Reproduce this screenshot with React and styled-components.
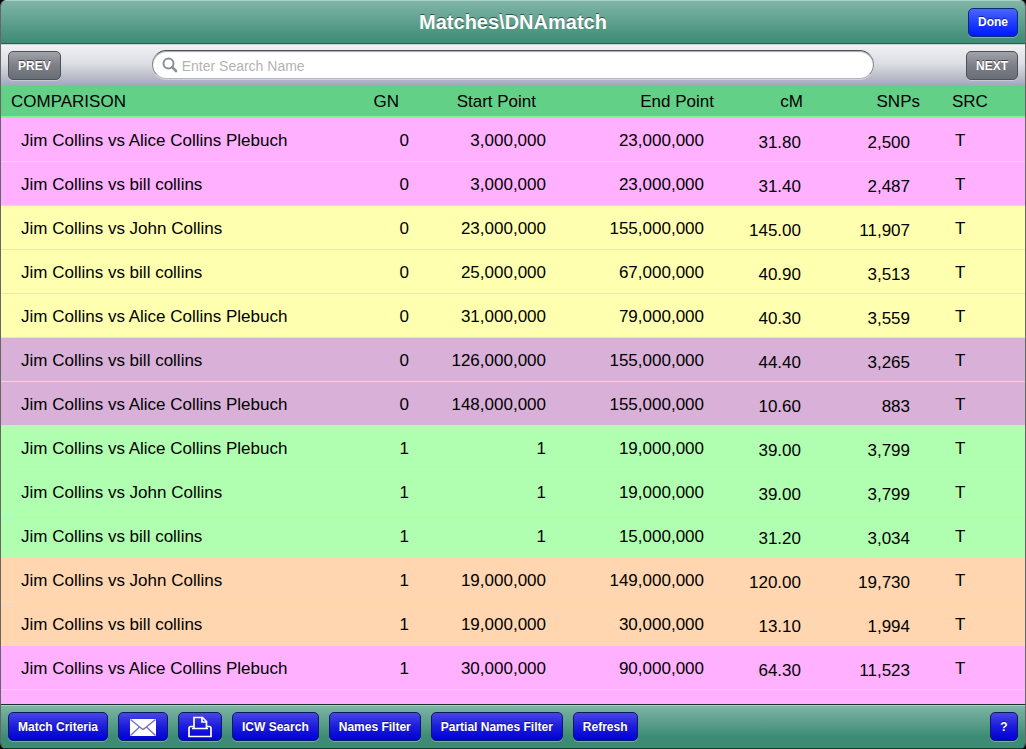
import React, { useState } from "react";
import styled, { createGlobalStyle } from "styled-components";

const COLORS = {
    pink: "#ffb0ff",
    yellow: "#ffffb0",
    purple: "#d8b0d8",
    green: "#b0ffb0",
    orange: "#ffd6b0",
};

const alice = "Jim Collins vs Alice Collins Plebuch";
const bill = "Jim Collins vs bill collins";
const john = "Jim Collins vs John Collins";

const matches = [
    { color: "pink", name: alice, gn: 0, start: 3000000, end: 23000000, cm: 31.8, snps: 2500 },
    { color: "pink", name: bill, gn: 0, start: 3000000, end: 23000000, cm: 31.4, snps: 2487 },
    { color: "yellow", name: john, gn: 0, start: 23000000, end: 155000000, cm: 145, snps: 11907 },
    { color: "yellow", name: bill, gn: 0, start: 25000000, end: 67000000, cm: 40.9, snps: 3513 },
    { color: "yellow", name: alice, gn: 0, start: 31000000, end: 79000000, cm: 40.3, snps: 3559 },
    { color: "purple", name: bill, gn: 0, start: 126000000, end: 155000000, cm: 44.4, snps: 3265 },
    { color: "purple", name: alice, gn: 0, start: 148000000, end: 155000000, cm: 10.6, snps: 883 },
    { color: "green", name: alice, gn: 1, start: 1, end: 19000000, cm: 39, snps: 3799 },
    { color: "green", name: john, gn: 1, start: 1, end: 19000000, cm: 39, snps: 3799 },
    { color: "green", name: bill, gn: 1, start: 1, end: 15000000, cm: 31.2, snps: 3034 },
    { color: "orange", name: john, gn: 1, start: 19000000, end: 149000000, cm: 120, snps: 19730 },
    { color: "orange", name: bill, gn: 1, start: 19000000, end: 30000000, cm: 13.1, snps: 1994 },
    { color: "pink", name: alice, gn: 1, start: 30000000, end: 90000000, cm: 64.3, snps: 11523 },
];

const format = (n) => n.toLocaleString("en-US");

export default function App() {
    const [search, setSearch] = useState("");

    return (
        <>
            <GlobalStyle />
            <Screen>
                <TitleBar>
                    <h1>Matches\DNAmatch</h1>
                    <BarButton $tone="bright">Done</BarButton>
                </TitleBar>

                <SearchBar>
                    <BarButton $tone="gray">PREV</BarButton>
                    <SearchField>
                        <SearchIcon />
                        <input
                            type="text"
                            aria-label="Search name"
                            placeholder="Enter Search Name"
                            value={search}
                            onChange={(e) => setSearch(e.target.value)}
                        />
                    </SearchField>
                    <BarButton $tone="gray">NEXT</BarButton>
                </SearchBar>

                <TableArea>
                    <MatchTable>
                        <colgroup>
                            <col />
                            <Col $width={70} />
                            <Col $width={137} />
                            <Col $width={168} />
                            <Col $width={87} />
                            <Col $width={119} />
                            <Col $width={95} />
                        </colgroup>
                        <thead>
                            <tr>
                                <HeadCell $left={10}>COMPARISON</HeadCell>
                                <HeadCell $right={20}>GN</HeadCell>
                                <HeadCell $right={20}>Start Point</HeadCell>
                                <HeadCell $right={10}>End Point</HeadCell>
                                <HeadCell $right={8}>cM</HeadCell>
                                <HeadCell $right={10}>SNPs</HeadCell>
                                <HeadCell $left={22}>SRC</HeadCell>
                            </tr>
                        </thead>
                        <tbody>
                            {matches.map((m, i) => (
                                <MatchRow key={i} $color={COLORS[m.color]}>
                                    <Cell $left={20}>{m.name}</Cell>
                                    <Cell $right={10}>{m.gn}</Cell>
                                    <Cell $right={10}>{format(m.start)}</Cell>
                                    <Cell $right={20}>{format(m.end)}</Cell>
                                    <Cell $right={10} $low>{m.cm.toFixed(2)}</Cell>
                                    <Cell $right={20} $low>{format(m.snps)}</Cell>
                                    <Cell $left={25}>T</Cell>
                                </MatchRow>
                            ))}
                        </tbody>
                    </MatchTable>
                </TableArea>

                <Toolbar>
                    <BarButton>Match Criteria</BarButton>
                    <BarButton aria-label="Email"><MailIcon /></BarButton>
                    <BarButton aria-label="Print"><PrinterIcon /></BarButton>
                    <BarButton>ICW Search</BarButton>
                    <BarButton>Names Filter</BarButton>
                    <BarButton>Partial Names Filter</BarButton>
                    <BarButton>Refresh</BarButton>
                    <Spacer />
                    <BarButton>?</BarButton>
                </Toolbar>
            </Screen>
        </>
    );
}

function SearchIcon() {
    return (
        <svg width="16" height="16" viewBox="0 0 16 16" fill="none" stroke="#8b8f98">
            <circle cx="6.5" cy="6.5" r="5" strokeWidth="2" />
            <path d="M10.2 10.2L14 14" strokeWidth="2.6" strokeLinecap="round" />
        </svg>
    );
}

function MailIcon() {
    return (
        <svg width="30" height="18" viewBox="0 0 30 18">
            <rect x="2" y="1" width="26" height="17" fill="#fff" />
            <path d="M2.5 1.5L13.5 10.5Q15 11.800 16.500 10.5L27.5 1.5M2.500 17.5L11.5 9M27.5 17.5L18.5 9" fill="none" stroke="#7472c0" strokeWidth="1.4" />
        </svg>
    );
}

function PrinterIcon() {
    return (
        <svg width="24" height="22" viewBox="0 0 24 22" fill="none" stroke="#fff" strokeWidth="1.7">
            <path d="M6 12V1.5h8.500l4 4V12M14 1.5V6h4.5" />
            <path d="M6 10.5H2.800Q1 10.5 1 12.5V20.500H23V12.500Q23 10.5 21.200 10.5H18.5" />
            <path d="M4 12.5H20" />
        </svg>
    );
}

const GlobalStyle = createGlobalStyle`
    * {
        box-sizing: border-box;
    }
    body {
        margin: 0;
        background-color: #000;
        font-family: "Liberation Sans", Arial, Helvetica, sans-serif;
    }
`
const Screen = styled.main`
    height: 100vh;
    display: flex;
    flex-direction: column;
    overflow: hidden;
    border: solid #666;
    border-width: 0 1px;
    border-radius: 6px;
`
const TitleBar = styled.header`
    flex: none;
    height: 44px;
    padding: 0 7px;
    display: grid;
    grid-template-columns: 1fr auto 1fr;
    align-items: center;
    background: linear-gradient(#80b5a6, #3c8b74);
    border-top: 1px solid #a9d3c6;
    border-bottom: 1px solid #2a6251;
    h1 {
        grid-column: 2;
        margin: 0;
        font-size: 20px;
        color: #fff;
        text-shadow: 0 -1px 0 rgba(0, 0, 0, 0.5);
    }
    button {
        justify-self: end;
    }
`
const SearchBar = styled.div`
    flex: none;
    height: 42px;
    padding: 0 7px;
    display: flex;
    align-items: center;
    justify-content: space-between;
    background: linear-gradient(#f1f1f4, #dcdee4 45%, #a3a6b6);
    border-top: 1px solid #c8d0d0;
`
const SearchField = styled.label`
    flex: 1;
    height: 29px;
    margin: 0 92px 2px 91px;
    padding: 0 9px;
    display: flex;
    align-items: center;
    gap: 4px;
    background-color: #fff;
    border: 1px solid #85878d;
    border-top-color: #505257;
    border-bottom-color: #b4b6c0;
    border-radius: 15px;
    box-shadow: inset 0 1px 1px rgba(0, 0, 0, 0.35), 0 1px 0 rgba(255, 255, 255, 0.4);
    input {
        flex: 1;
        min-width: 0;
        padding: 2px 0 0;
        border: none;
        outline: none;
        background: none;
        font-family: inherit;
        font-size: 14px;
    }
    input::placeholder {
        color: #b3b3b3;
        opacity: 1;
    }
`
const TONES = {
    blue: ["linear-gradient(#4747e4, #1c1cdc 50%, #0000d8)", "#0c1a66"],
    bright: ["linear-gradient(#4c66ff, #1f3dff 50%, #0018ff)", "#0c2a78"],
    gray: ["linear-gradient(#a0a3a9, #7d8087 50%, #696d75)", "#4d5057"],
};
const BarButton = styled.button.attrs({ type: "button" })`
    min-width: 28px;
    height: 29px;
    padding: 0 9px;
    display: flex;
    align-items: center;
    justify-content: center;
    font-family: inherit;
    font-size: 12px;
    font-weight: 700;
    white-space: nowrap;
    color: #fff;
    text-shadow: 0 -1px 0 rgba(0, 0, 0, 0.5);
    background: ${(props) => TONES[props.$tone || "blue"][0]};
    border: 1px solid ${(props) => TONES[props.$tone || "blue"][1]};
    border-radius: 5px;
    box-shadow: 0 1px 0 rgba(255, 255, 255, 0.3);
    cursor: pointer;
`
const TableArea = styled.section`
    flex: 1;
    min-height: 0;
    overflow: hidden;
    background-color: ${COLORS.pink};
`
const MatchTable = styled.table`
    width: 100%;
    table-layout: fixed;
    border-collapse: separate;
    border-spacing: 0;
    font-size: 17px;
    line-height: 20px;
    color: #000;
`
const Col = styled.col`
    width: ${(props) => props.$width}px;
`
const HeadCell = styled.th`
    height: 32px;
    padding: 2px ${(props) => props.$right || 0}px 0 ${(props) => props.$left || 0}px;
    font-weight: 400;
    text-align: ${(props) => (props.$left ? "left" : "right")};
    background-color: #63d088;
    border-bottom: 2px solid #80f58a;
`
const MatchRow = styled.tr`
    background-color: ${(props) => props.$color};
`
const Cell = styled.td`
    height: 44px;
    padding: ${(props) => (props.$low ? 7 : 3)}px ${(props) => props.$right || 0}px 0 ${(props) => props.$left || 0}px;
    text-align: ${(props) => (props.$left ? "left" : "right")};
    white-space: nowrap;
    border-bottom: 1px solid rgba(224, 224, 224, 0.9);
`
const Toolbar = styled.footer`
    flex: none;
    height: 45px;
    padding: 0 7px;
    display: flex;
    align-items: center;
    gap: 10px;
    background: linear-gradient(#80b5a6, #3c8b74 75%);
    border-top: 1px solid #16302a;
    border-bottom: 1px solid #123a26;
    box-shadow: inset 0 1px 0 #b0d0c6;
`
const Spacer = styled.div`
    flex: 1;
`
